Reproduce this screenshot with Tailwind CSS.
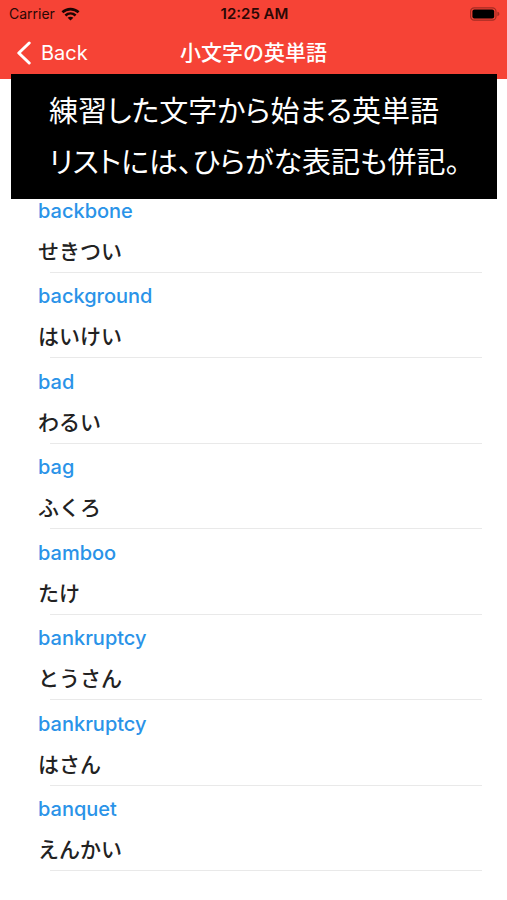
<!DOCTYPE html>
<html lang="ja">
<head>
  <meta charset="UTF-8">
  <meta name="viewport" content="width=device-width, initial-scale=1">
  <title>小文字の英単語</title>
  <script src="https://cdn.jsdelivr.net/npm/@tailwindcss/browser@4"></script>
</head>
<body class="relative min-h-screen bg-white text-[#222] font-['Inter','Noto_Sans_CJK_JP',sans-serif]">
  <header class="bg-[#f64336]">
    <!-- Status bar -->
    <div class="grid grid-cols-3 items-center h-[27px] pl-[9px] pr-[7px] text-[#2a0805]">
      <div class="flex items-center gap-[6px] text-sm">
        <span>Carrier</span>
        <svg class="w-[19px] h-[14px]" viewBox="0 0 19 14" fill="none" stroke="#1c0503" stroke-width="2.6" aria-hidden="true">
          <path d="M1.4 5.3C6 1 13 1 17.6 5.3"/>
          <path d="M4.4 8.5C7.4 5.8 11.6 5.8 14.6 8.5"/>
          <path d="M9.5 13.6L6.6 10.7C8.3 9.3 10.7 9.3 12.4 10.7Z" fill="#1c0503" stroke="none"/>
        </svg>
      </div>
      <span class="text-center text-[15px] leading-[21px] font-semibold">12:25 AM</span>
      <svg class="w-[31px] h-[14px] justify-self-end" viewBox="0 0 31 14" aria-hidden="true">
        <rect x="1.6" y="0.8" width="25.4" height="12.4" rx="3.6" fill="none" stroke="#a32c23" stroke-width="1.2"/>
        <rect x="3.4" y="2.6" width="21.8" height="8.8" rx="2" fill="#000"/>
        <path d="M28.4 4.8C31 5.4 31 8.6 28.4 9.2Z" fill="#a32c23"/>
      </svg>
    </div>

    <!-- Navigation bar -->
    <div class="grid grid-cols-[1fr_auto_1fr] items-center h-[52px] px-4 text-white">
      <button type="button" class="flex items-center gap-[9px] justify-self-start text-xl">
        <svg class="w-4 h-6" viewBox="0 0 16 24" fill="none" stroke="currentColor" stroke-width="3" stroke-linecap="round" stroke-linejoin="round" aria-hidden="true">
          <path d="M13.2 2L2.8 12L13.2 22"/>
        </svg>
        Back
      </button>
      <h1 class="text-[21px] leading-6 font-medium">小文字の英単語</h1>
    </div>
  </header>

  <!-- Caption laid over the list -->
  <p class="absolute top-[74px] left-[11px] right-[10px] h-[125px] pt-[10px] pl-[38px] bg-black text-white text-[29px] leading-[51px] whitespace-nowrap font-['Noto_Sans_CJK_JP',sans-serif] [font-feature-settings:'palt']">
    練習した文字から始まる英単語<br>リストには、ひらがな表記も併記。
  </p>

  <main class="pt-[108px] pl-[38px] pr-[25px]">
    <ul class="font-medium">
      <li class="pt-3 even:pt-[11px]">
        <a href="#" class="block text-xl leading-6 text-[#2a93e8]">backbone</a>
        <p class="mt-[17px] text-[21px] leading-6">せきつい</p>
        <div class="mt-2 ml-3 h-px bg-[#e9e9e9]"></div>
      </li>
      <li class="pt-3 even:pt-[11px]">
        <a href="#" class="block text-xl leading-6 text-[#2a93e8]">background</a>
        <p class="mt-[17px] text-[21px] leading-6">はいけい</p>
        <div class="mt-2 ml-3 h-px bg-[#e9e9e9]"></div>
      </li>
      <li class="pt-3 even:pt-[11px]">
        <a href="#" class="block text-xl leading-6 text-[#2a93e8]">bad</a>
        <p class="mt-[17px] text-[21px] leading-6">わるい</p>
        <div class="mt-2 ml-3 h-px bg-[#e9e9e9]"></div>
      </li>
      <li class="pt-3 even:pt-[11px]">
        <a href="#" class="block text-xl leading-6 text-[#2a93e8]">bag</a>
        <p class="mt-[17px] text-[21px] leading-6">ふくろ</p>
        <div class="mt-2 ml-3 h-px bg-[#e9e9e9]"></div>
      </li>
      <li class="pt-3 even:pt-[11px]">
        <a href="#" class="block text-xl leading-6 text-[#2a93e8]">bamboo</a>
        <p class="mt-[17px] text-[21px] leading-6">たけ</p>
        <div class="mt-2 ml-3 h-px bg-[#e9e9e9]"></div>
      </li>
      <li class="pt-3 even:pt-[11px]">
        <a href="#" class="block text-xl leading-6 text-[#2a93e8]">bankruptcy</a>
        <p class="mt-[17px] text-[21px] leading-6">とうさん</p>
        <div class="mt-2 ml-3 h-px bg-[#e9e9e9]"></div>
      </li>
      <li class="pt-3 even:pt-[11px]">
        <a href="#" class="block text-xl leading-6 text-[#2a93e8]">bankruptcy</a>
        <p class="mt-[17px] text-[21px] leading-6">はさん</p>
        <div class="mt-2 ml-3 h-px bg-[#e9e9e9]"></div>
      </li>
      <li class="pt-3 even:pt-[11px]">
        <a href="#" class="block text-xl leading-6 text-[#2a93e8]">banquet</a>
        <p class="mt-[17px] text-[21px] leading-6">えんかい</p>
        <div class="mt-2 ml-3 h-px bg-[#e9e9e9]"></div>
      </li>
    </ul>
  </main>
</body>
</html>
